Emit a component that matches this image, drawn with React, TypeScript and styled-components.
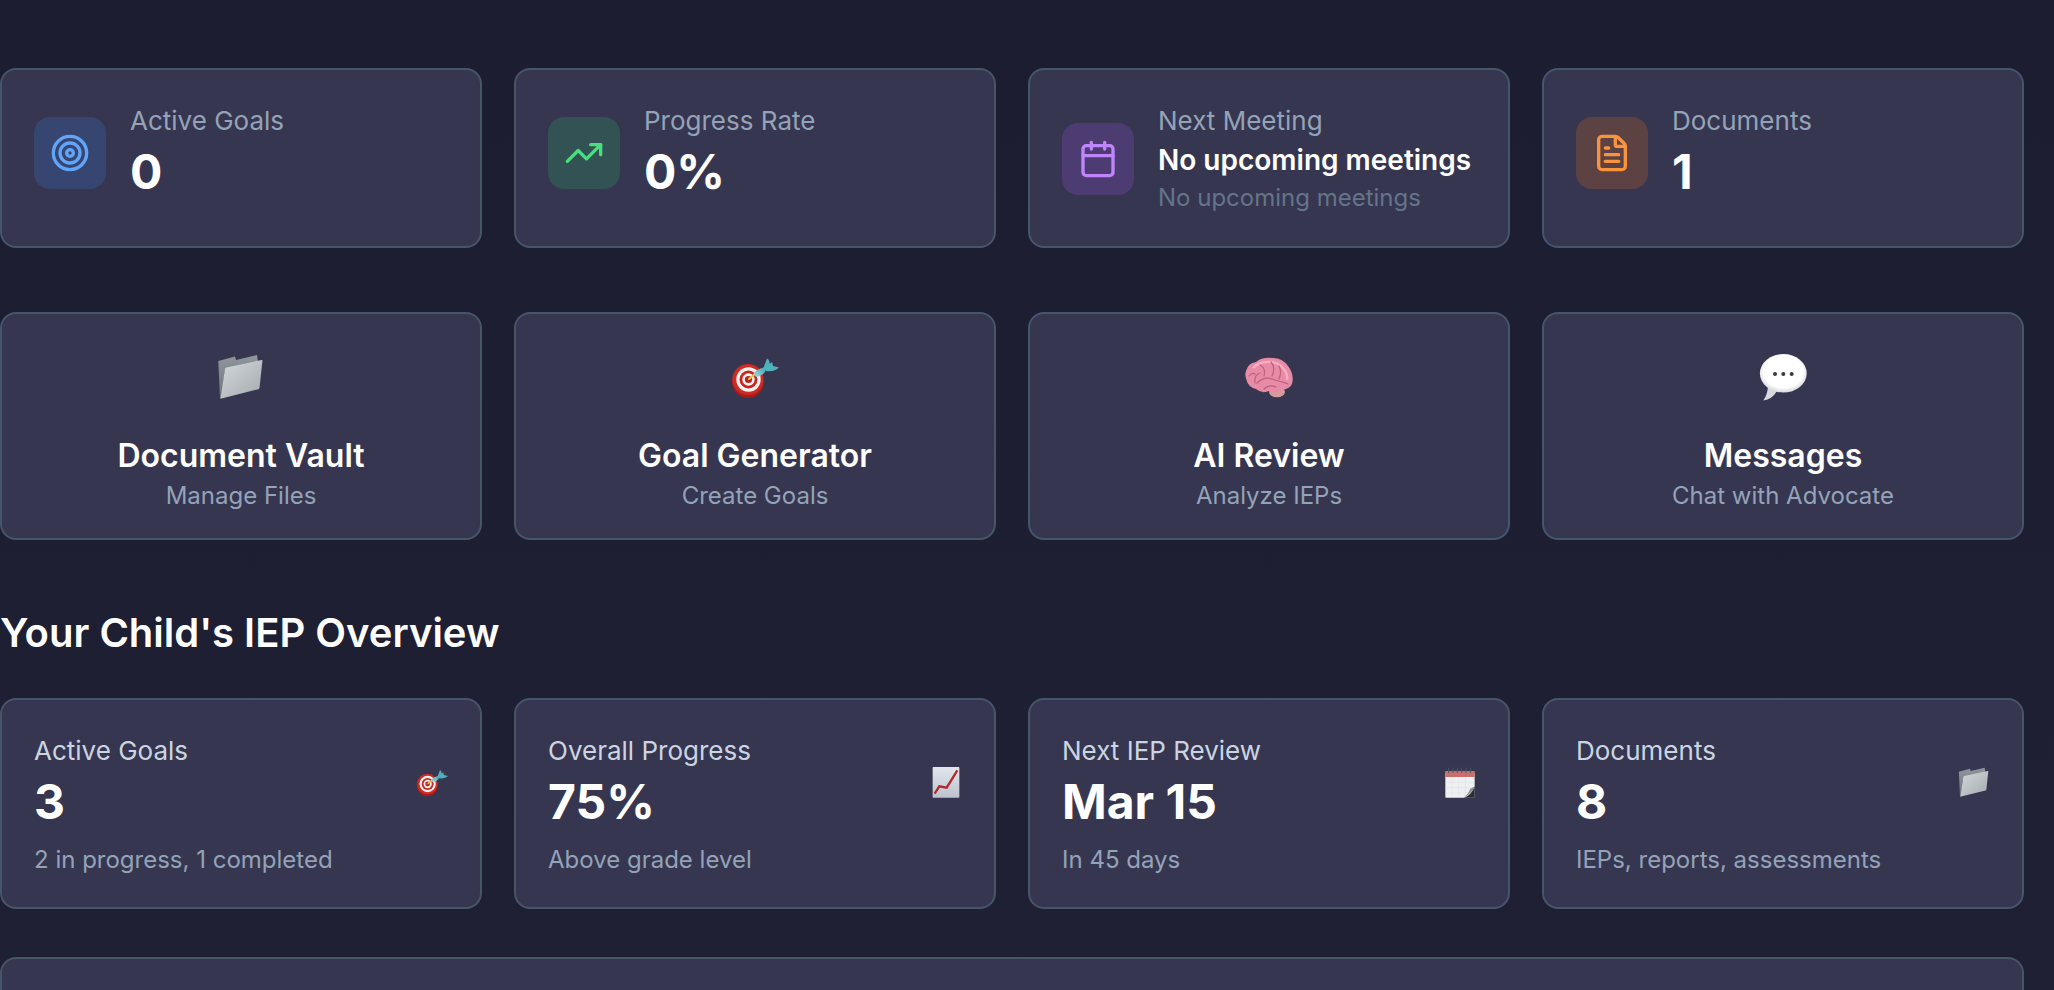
import React from "react";
import styled, { createGlobalStyle } from "styled-components";
import { Target, TrendingUp, Calendar, FileText } from "lucide-react";

const Global = createGlobalStyle`
  html, body { margin: 0; padding: 0; height: 100%; overflow: hidden; background: #1e1e31; }
  body { font-family: Inter, "Noto Sans", sans-serif; -webkit-font-smoothing: antialiased; }
`;

const Page = styled.div`
  height: 990px;
  box-sizing: border-box;
  padding: 68px 30px 0 0;
  overflow: hidden;
  background: linear-gradient(180deg, #1c1d30 0%, #1f2034 100%);
`;
const Grid = styled.div<{ $mb: number }>`
  display: grid;
  grid-template-columns: repeat(4, 482px);
  gap: 32px;
  margin-bottom: ${(p) => p.$mb}px;
`;
const Card = styled.div`
  box-sizing: border-box;
  background: #363650;
  border: 2px solid #475569;
  border-radius: 16px;
`;
const StatCard = styled(Card)`
  height: 180px;
  padding: 32px;
`;
const StatRow = styled.div`
  display: flex;
  align-items: center;
  gap: 24px;
`;
const IconTile = styled.div<{ $bg: string; $fg: string }>`
  width: 72px;
  height: 72px;
  flex: none;
  border-radius: 16px;
  display: flex;
  align-items: center;
  justify-content: center;
  background: ${(p) => p.$bg};
  color: ${(p) => p.$fg};
`;
const StatText = styled.div`
  display: flex;
  flex-direction: column;
`;
const StatLabel = styled.div`
  font-size: 26px;
  line-height: 38px;
  color: #94a3b8;
  font-weight: 400;
`;
const StatValue = styled.div`
  font-size: 48px;
  line-height: 64px;
  color: #fff;
  font-weight: 700;
`;
const StatTextValue = styled.div`
  font-size: 28px;
  line-height: 40px;
  color: #fff;
  font-weight: 600;
`;
const StatNote = styled.div`
  font-size: 24px;
  line-height: 36px;
  color: #64748b;
`;
const ActionCard = styled(Card)`
  height: 228px;
  display: flex;
  flex-direction: column;
  align-items: center;
  padding-top: 40px;
`;
const ActionEmoji = styled.div`
  height: 72px;
  margin-bottom: 0;
`;
const ActionTitle = styled.div`
  font-size: 32px;
  line-height: 44px;
  color: #fff;
  font-weight: 600;
  margin-top: 8px;
`;
const ActionSub = styled.div`
  font-size: 24px;
  line-height: 36px;
  color: #94a3b8;
`;
const Heading = styled.h2`
  margin: 0 0 36px;
  font-size: 40px;
  line-height: 58px;
  font-weight: 600;
  color: #fff;
`;
const OverviewCard = styled(Card)`
  height: 211px;
  padding: 32px;
  display: flex;
  justify-content: space-between;
`;
const OverviewText = styled.div`
  display: flex;
  flex-direction: column;
`;
const OverviewLabel = styled.div`
  font-size: 26px;
  line-height: 38px;
  color: #cbd5e1;
`;
const OverviewValue = styled.div`
  font-size: 48px;
  line-height: 64px;
  font-weight: 700;
  color: #fff;
`;
const OverviewNote = styled.div`
  font-size: 24px;
  line-height: 36px;
  color: #94a3b8;
  margin-top: 8px;
`;
const OverviewEmoji = styled.div`
  width: 32px;
  height: 32px;
  margin-top: 35px;
`;
const Panel = styled(Card)`
  height: 300px;
  width: 2024px;
`;

const Em: React.FC<{ size: number; children: React.ReactNode }> = ({ size, children }) => (
  <svg width={size} height={size} viewBox="0 0 48 48" style={{ display: "block" }}>
    {children}
  </svg>
);

const Folder = ({ size }: { size: number }) => (
  <Em size={size}>
    <defs>
      <linearGradient id="fdFront" x1="0" y1="0" x2="1" y2="1">
        <stop offset="0" stopColor="#d4d9dc" />
        <stop offset="1" stopColor="#a3a9ae" />
      </linearGradient>
      <linearGradient id="fdBack" x1="0" y1="0" x2="0" y2="1">
        <stop offset="0" stopColor="#8f979c" />
        <stop offset="1" stopColor="#6d757b" />
      </linearGradient>
    </defs>
    <path d="M1.3 7 L18 2.5 L19 6 L40 1 L41 8 L8 15 L4 45 L3 45 Z" fill="url(#fdBack)" />
    <path d="M8 14.5 Q8.5 13.6 9.5 13.4 L44.5 6 Q45.6 5.8 45.4 7 L42.5 34 Q42.3 35 41.4 35.2 L4.6 44.4 Q3.5 44.6 3.7 43.5 Z" fill="url(#fdFront)" />
  </Em>
);

const Dart = ({ size }: { size: number }) => (
  <Em size={size}>
    <defs>
      <linearGradient id="dtTail" x1="0" y1="1" x2="1" y2="0">
        <stop offset="0" stopColor="#a9dde2" />
        <stop offset="1" stopColor="#3fa3ac" />
      </linearGradient>
    </defs>
    <ellipse cx="17" cy="27.5" rx="16" ry="16.5" fill="#a31d1a" />
    <circle cx="17" cy="25.5" r="15.5" fill="#cf2a24" />
    <circle cx="17.5" cy="25.5" r="12.2" fill="#f7f2f0" />
    <circle cx="17.5" cy="25.5" r="9" fill="#c9231f" />
    <circle cx="17.5" cy="25.5" r="6.2" fill="#f7f2f0" />
    <circle cx="17.5" cy="25.5" r="3.6" fill="#b52420" />
    <path d="M18 25 L24 20" stroke="#e3c24c" strokeWidth="2.2" strokeLinecap="round" />
    <path d="M22.5 19 Q27 14.5 33 13.5 Q35 16 34 18 Q29 23 25 23 Z" fill="url(#dtTail)" />
    <path d="M32 15 L36 4.5 Q39 6 38.5 10 L41 8 L42 12 L48 13.5 Q44 18 35 17 Z" fill="#4fb2ba" />
  </Em>
);

const Brain = ({ size }: { size: number }) => (
  <Em size={size}>
    <ellipse cx="32" cy="38" rx="8" ry="5.2" fill="#d79a9c" />
    <path d="M1 17 Q3 9 11 8 Q17 3 27 4 Q37 3.5 43 12 Q48.5 19 47.6 27 Q47 33 41 35 Q33 39 24 37 Q17 40 11 35 Q3 33 1.5 26 Q-0.5 21 1 17 Z" fill="#e88ba6" />
    <path d="M8 14 Q14 8 22 8 Q32 7 38 14 Q43 20 42 26" fill="none" stroke="#f5afc3" strokeWidth="2.4" />
    <path d="M10 29 Q9 21 15 19 M15 11 Q21 14 19 22 M26 8 Q31 13 27 22 M34 12 Q37 18 34 25 M12 29 Q20 21 30 26 Q38 28 43 30 M19 35 Q24 30 31 33 M4 22 Q7 18 10 20" fill="none" stroke="#bf5f7e" strokeWidth="1.2" strokeLinecap="round" />
  </Em>
);

const Bubble = ({ size }: { size: number }) => (
  <Em size={size}>
    <defs>
      <radialGradient id="bbFill" cx="0.5" cy="0.45" r="0.6">
        <stop offset="0.7" stopColor="#ffffff" />
        <stop offset="1" stopColor="#c9c9d2" />
      </radialGradient>
    </defs>
    <path d="M9 31 Q9 40 4.3 46.5 Q13 45.5 18 37 Z" fill="#d8d8df" />
    <ellipse cx="24.3" cy="19.3" rx="23.4" ry="19.3" fill="url(#bbFill)" />
    <circle cx="16" cy="20" r="2" fill="#3a3a3f" />
    <circle cx="24.3" cy="20" r="2" fill="#3a3a3f" />
    <circle cx="32.7" cy="20" r="2" fill="#3a3a3f" />
  </Em>
);

const Chart = ({ size }: { size: number }) => (
  <Em size={size}>
    <defs>
      <linearGradient id="chBg" x1="0" y1="0" x2="0" y2="1">
        <stop offset="0" stopColor="#e2e7ec" />
        <stop offset="1" stopColor="#bcc3cf" />
      </linearGradient>
    </defs>
    <rect x="4" y="0" width="40" height="46" rx="1" fill="url(#chBg)" />
    <path d="M7 40 L14 29 L25 31 L41 5" fill="none" stroke="#b02a2a" strokeWidth="3.4" />
  </Em>
);

const CalendarEmoji = ({ size }: { size: number }) => (
  <Em size={size}>
    <rect x="2" y="8" width="44" height="38" rx="1" fill="#eef0f2" />
    <rect x="2" y="6" width="44" height="9" fill="#c9706c" />
    <g stroke="#4a5560" strokeWidth="1.6">
      <path d="M7 1v8M13.5 1v8M20 1v8M26.5 1v8M33 1v8M39.5 1v8" />
    </g>
    <g stroke="#d9dbde" strokeWidth="0.6">
      <path d="M2 23h44M2 31h44M2 39h44M12 15v31M22 15v31M32 15v31" />
    </g>
    <path d="M46 29 Q40 44 30 46 L46 46 Z" fill="#2b2b33" />
    <path d="M46 29 Q44 38 30 46 Q38 38 39 33 Z" fill="#8e9096" />
  </Em>
);

const stats = [
  { label: "Active Goals", value: "0", bg: "rgba(59,130,246,0.2)", fg: "#60a5fa", Icon: Target },
  { label: "Progress Rate", value: "0%", bg: "rgba(34,197,94,0.2)", fg: "#4ade80", Icon: TrendingUp },
  { label: "Next Meeting", text: "No upcoming meetings", note: "No upcoming meetings", bg: "rgba(168,85,247,0.2)", fg: "#c084fc", Icon: Calendar },
  { label: "Documents", value: "1", bg: "rgba(249,115,22,0.2)", fg: "#fb923c", Icon: FileText },
];
const actions = [
  { title: "Document Vault", sub: "Manage Files", E: Folder },
  { title: "Goal Generator", sub: "Create Goals", E: Dart },
  { title: "AI Review", sub: "Analyze IEPs", E: Brain },
  { title: "Messages", sub: "Chat with Advocate", E: Bubble },
];
const overview = [
  { label: "Active Goals", value: "3", note: "2 in progress, 1 completed", E: Dart },
  { label: "Overall Progress", value: "75%", note: "Above grade level", E: Chart },
  { label: "Next IEP Review", value: "Mar 15", note: "In 45 days", E: CalendarEmoji },
  { label: "Documents", value: "8", note: "IEPs, reports, assessments", E: Folder },
];

export default function App() {
  return (
    <Page>
      <Global />
      <Grid $mb={64}>
        {stats.map(({ label, value, text, note, bg, fg, Icon }) => (
          <StatCard key={label}>
            <StatRow>
              <IconTile $bg={bg} $fg={fg}>
                <Icon size={40} strokeWidth={2} />
              </IconTile>
              <StatText>
                <StatLabel>{label}</StatLabel>
                {value && <StatValue>{value}</StatValue>}
                {text && <StatTextValue>{text}</StatTextValue>}
                {note && <StatNote>{note}</StatNote>}
              </StatText>
            </StatRow>
          </StatCard>
        ))}
      </Grid>
      <Grid $mb={64}>
        {actions.map(({ title, sub, E }) => (
          <ActionCard key={title}>
            <ActionEmoji>
              <E size={48} />
            </ActionEmoji>
            <ActionTitle>{title}</ActionTitle>
            <ActionSub>{sub}</ActionSub>
          </ActionCard>
        ))}
      </Grid>
      <Heading>Your Child's IEP Overview</Heading>
      <Grid $mb={48}>
        {overview.map(({ label, value, note, E }) => (
          <OverviewCard key={label}>
            <OverviewText>
              <OverviewLabel>{label}</OverviewLabel>
              <OverviewValue>{value}</OverviewValue>
              <OverviewNote>{note}</OverviewNote>
            </OverviewText>
            <OverviewEmoji>
              <E size={32} />
            </OverviewEmoji>
          </OverviewCard>
        ))}
      </Grid>
      <Panel />
    </Page>
  );
}
